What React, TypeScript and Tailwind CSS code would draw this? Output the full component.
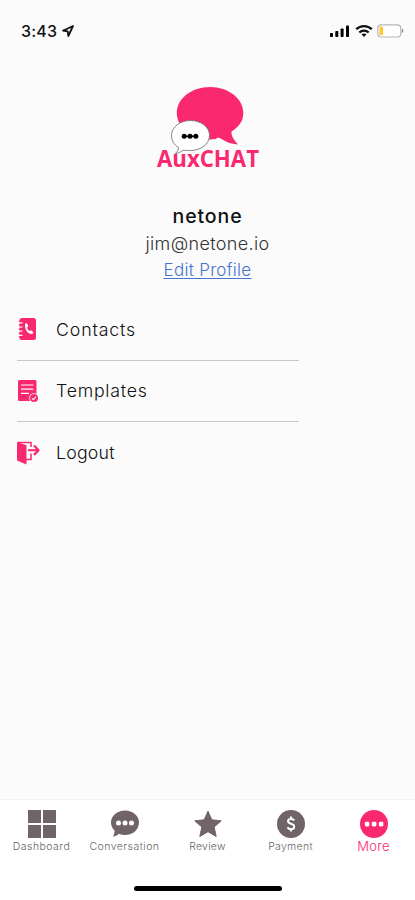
import React from 'react';

const PINK = '#f9286f';

const Logo: React.FC = () => (
  <svg className="w-[125px] h-[98px]" viewBox="0 0 125 98">
    <path
      fill={PINK}
      d="M65 9C83.500 9 98.300 20.500 98.300 35C98.300 43 94 49 86.500 53.500C86 58 89 62 93 66.500C86 66 81 64 76.500 61C74 60 73 59 71 61C69 61.400 67 61.400 65 61.400C46.500 61.400 31.800 49.500 31.800 35C31.800 20.500 46.500 9 65 9Z"
    />
    <path
      fill="#fff"
      stroke="#777"
      strokeWidth="0.9"
      d="M45.500 42.500C56 42.500 64.500 49 64.500 57.500C64.500 66 56 72.500 45.500 72.500C43 72.500 40 72.300 38 72.300C36 73.800 33 75.300 30.500 75.500C32.500 73.500 33.500 71.500 33.700 69.500C29 66.800 26.500 62.500 26.500 57.500C26.500 49 35 42.500 45.500 42.500Z"
    />
    <path d="M39 58.300h12" stroke="#000" strokeWidth="1.500" />
    <circle cx="39.200" cy="58.300" r="2.500" />
    <circle cx="45" cy="58.300" r="2.500" />
    <circle cx="50.800" cy="58.300" r="2.500" />
    <text
      x="12"
      y="88.500"
      fill={PINK}
      textLength="102"
      lengthAdjust="spacingAndGlyphs"
      className="font-['Open_Sans','Noto_Sans',sans-serif] text-[22.500px] font-bold"
    >
      AuxCHAT
    </text>
  </svg>
);

const StatusBar: React.FC = () => (
  <div className="flex h-[62px] items-center justify-between pl-[21px] pr-[11px]">
    <div className="flex items-center gap-[5px]">
      <span className="text-[16px] font-medium tracking-[0.2px] leading-5">3:43</span>
      <svg className="h-3 w-3" viewBox="0 0 12 12">
        <path d="M11 1L1 5.700L5.700 6.300L6.300 11Z" fill="none" stroke="#111" strokeWidth="1.800" strokeLinejoin="round" />
      </svg>
    </div>
    <div className="flex items-center">
      <svg className="h-[14px] w-[20px]" viewBox="0 0 20 14">
        <rect x="0" y="9" width="3" height="4" rx="0.800" />
        <rect x="5.300" y="7" width="3" height="6" rx="0.800" />
        <rect x="10.600" y="4.500" width="3" height="8.500" rx="0.800" />
        <rect x="16" y="1.500" width="3" height="11.500" rx="0.800" />
      </svg>
      <svg className="ml-[5px] h-[14px] w-[18px]" viewBox="0 0 18 14" fill="none" stroke="#111" strokeWidth="2.200">
        <path d="M1.200 5.300C5.500 1 12.500 1 16.800 5.300" />
        <path d="M4.300 8.500C7 5.900 11 5.900 13.700 8.500" />
        <path d="M6.500 10.300C8 9.100 10 9.100 11.500 10.300L9 12.900Z" fill="#111" stroke="none" />
      </svg>
      <svg className="ml-[4px] h-[14px] w-[27px]" viewBox="0 0 27 14">
        <rect x="0.800" y="0.800" width="23" height="12.200" rx="3.500" fill="#fff" stroke="#b5b5b5" strokeWidth="1.200" />
        <rect x="2.500" y="2.500" width="3.500" height="8.800" rx="1.400" fill="#fbc62f" />
        <path d="M25 4.800C26.700 5.300 26.700 8.500 25 9Z" fill="#888" />
      </svg>
    </div>
  </div>
);

const ContactsIcon: React.FC = () => (
  <svg className="h-6 w-6" viewBox="0 0 24 24">
    <path fill={PINK} d="M5 1H16.500Q19 1 19 3.500V20.500Q19 23 16.500 23H5Q2.500 23 2.500 20.500V3.500Q2.500 1 5 1Z" />
    <path stroke="#fbfbfb" strokeWidth="1.200" d="M2 5.800H5.500M2 10H5.500M2 14.200H5.500M2 18.400H5.500" />
    <path stroke={PINK} strokeWidth="1.500" strokeLinecap="round" d="M2.500 4.200H5M2.500 8H5M2.500 12.200H5M2.500 16.300H5M2.500 20H5" />
    <path
      fill="#fff"
      d="M8.200 6.500L10 6.200L11.300 9L10.200 10.400C10.500 12.200 11.400 13.400 12.900 14.100L14.200 13.200L16.300 15.200L15.400 17C11.500 17.800 7 12.500 8.200 6.500Z"
    />
  </svg>
);

const TemplatesIcon: React.FC = () => (
  <svg className="h-6 w-6" viewBox="0 0 24 24">
    <rect x="1" y="1" width="18.500" height="21" rx="1.500" fill={PINK} />
    <path stroke="#fff" strokeWidth="1.200" strokeLinecap="round" d="M4.500 6H16M4.500 10.200H16M4.500 14.400H11.500" />
    <circle cx="17" cy="19" r="4.800" fill="#fbfbfb" />
    <circle cx="17" cy="19" r="4" fill={PINK} />
    <path d="M15.100 19.500L16.500 20.700L19 17.500" fill="none" stroke="#fff" strokeWidth="1.100" />
  </svg>
);

const LogoutIcon: React.FC = () => (
  <svg className="h-6 w-6" viewBox="0 0 24 24">
    <path fill={PINK} d="M0 1L9.500 4.300V23.500L0 19.500Z" />
    <path fill="none" stroke={PINK} strokeWidth="1.500" d="M1 1.500H14V6M9 18.500H14V12.500" />
    <path fill="none" stroke={PINK} strokeWidth="2" d="M11 9.200H21" />
    <path fill="none" stroke={PINK} strokeWidth="2.300" strokeLinejoin="round" d="M17 4.500L21.500 9.200L17 13.900" />
  </svg>
);

const DashboardIcon: React.FC = () => (
  <svg className="h-7 w-7" viewBox="0 0 28 28" fill="#706468">
    <rect width="13" height="13" />
    <rect x="15" width="13" height="13" />
    <rect y="15" width="13" height="13" />
    <rect x="15" y="15" width="13" height="13" />
  </svg>
);

const ConversationIcon: React.FC = () => (
  <svg className="h-7 w-7" viewBox="0 0 28 28">
    <path
      fill="#706468"
      d="M14 .5C21.800 .5 28 5.700 28 12.500C28 19.500 21.800 25 14 25C11.800 25 9.800 24.600 8 23.800C6.500 25.300 4 26.500 1.800 26.500C3 25 3.700 22.500 3.500 20.500C1.300 18.300 0 15.500 0 12.500C0 5.700 6.200 .5 14 .5Z"
    />
    <circle cx="7.500" cy="13" r="2.500" fill="#fff" />
    <circle cx="14" cy="13" r="2.500" fill="#fff" />
    <circle cx="20.500" cy="13" r="2.500" fill="#fff" />
  </svg>
);

const ReviewIcon: React.FC = () => (
  <svg className="h-7 w-7" viewBox="0 0 28 28">
    <path
      fill="#706468"
      stroke="#706468"
      strokeLinejoin="round"
      d="M14 1.200L17.800 9.800L27.200 10.800L20.200 17.100L22.200 26.500L14 21.700L5.800 26.500L7.800 17.100L.8 10.800L10.200 9.800Z"
    />
  </svg>
);

const PaymentIcon: React.FC = () => (
  <svg className="h-7 w-7" viewBox="0 0 28 28">
    <circle cx="14" cy="14" r="14" fill="#706468" />
    <path
      fill="none"
      stroke="#fff"
      strokeWidth="2"
      d="M17.300 10.500C16.500 9.200 15.300 8.900 14 8.900C12.200 8.900 11 9.800 11 11.300C11 14.600 17.200 13 17.200 16.700C17.200 18.300 15.800 19.200 14 19.200C12.300 19.200 11.200 18.500 10.500 17.200M14 6.500V9M14 19V21.500"
    />
  </svg>
);

const MoreIcon: React.FC = () => (
  <svg className="h-7 w-7" viewBox="0 0 28 28">
    <circle cx="14" cy="14" r="14" fill={PINK} />
    <rect x="4.800" y="11.800" width="4.600" height="4.600" rx="1.300" fill="#fff" />
    <rect x="11.800" y="11.800" width="4.600" height="4.600" rx="1.300" fill="#fff" />
    <rect x="18.800" y="11.800" width="4.600" height="4.600" rx="1.300" fill="#fff" />
  </svg>
);

const menuItems = [
  { label: 'Contacts', icon: ContactsIcon, tracking: 'tracking-[0.85px]' },
  { label: 'Templates', icon: TemplatesIcon, tracking: 'tracking-[0.75px]' },
  { label: 'Logout', icon: LogoutIcon, tracking: 'tracking-[0.2px]' },
];

const tabs = [
  { label: 'Dashboard', icon: DashboardIcon, tracking: 'tracking-[0.45px]' },
  { label: 'Conversation', icon: ConversationIcon, tracking: 'tracking-[0.45px]' },
  { label: 'Review', icon: ReviewIcon, tracking: 'tracking-[0.2px]' },
  { label: 'Payment', icon: PaymentIcon, tracking: 'tracking-[0.3px]' },
];

export default function App() {
  return (
    <div className="flex h-[900px] w-[415px] flex-col overflow-hidden bg-[#fbfbfb] font-['Inter',sans-serif] text-[#111]">
      <StatusBar />

      <div className="flex flex-col items-center pt-4">
        <Logo />
        <h1 className="mt-[27px] text-[19.500px] leading-[26px] font-medium tracking-[0.9px]">netone</h1>
        <p className="mt-[2px] text-[18px] leading-[26px] font-light tracking-[0.35px] text-[#333]">jim@netone.io</p>
        <a className="text-[17px] leading-[26px] font-light tracking-[0.3px] text-[#4674cb] underline underline-offset-2">
          Edit Profile
        </a>
      </div>

      <ul className="ml-[17px] mt-[16px] w-[282px]">
        {menuItems.map(({ label, icon: Icon, tracking }) => (
          <li key={label} className="flex h-[61.500px] items-center gap-[15px] border-b border-[#c8c8c8] last:border-b-0">
            <Icon />
            <span className={`pt-[2px] text-[17.750px] font-light ${tracking}`}>{label}</span>
          </li>
        ))}
      </ul>

      <nav className="mt-auto h-[101px] border-t border-[#f1f1f1] bg-white">
        <div className="grid h-[86px] grid-cols-5 pt-[10px]">
          {tabs.map(({ label, icon: Icon, tracking }) => (
            <div key={label} className="flex flex-col items-center">
              <Icon />
              <span className={`mt-[2px] text-[10.500px] leading-[14px] font-light text-[#666] ${tracking}`}>{label}</span>
            </div>
          ))}
          <div className="flex flex-col items-center">
            <MoreIcon />
            <span className="text-[13px] leading-[16px] font-light tracking-[0.3px] text-[#f9286f]">More</span>
          </div>
        </div>
        <div className="mx-auto h-[5px] w-[148px] rounded-full bg-black" />
      </nav>
    </div>
  );
}
